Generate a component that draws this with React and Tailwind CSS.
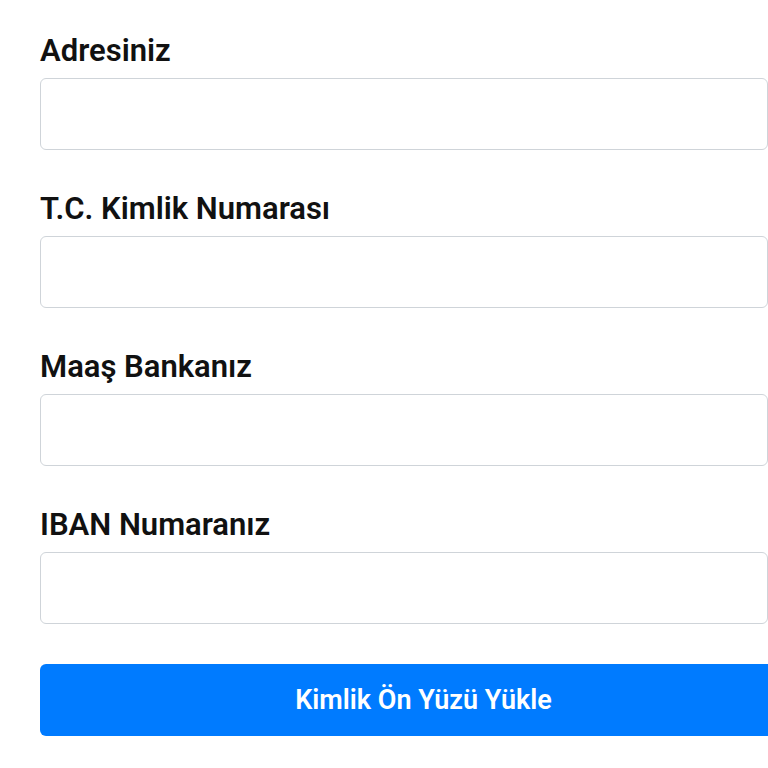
export default function App() {
  const fields = ["Adresiniz", "T.C. Kimlik Numarası", "Maaş Bankanız", "IBAN Numaranız"];
  return (
    <div className="w-[768px] h-[768px] overflow-hidden bg-white pl-[40px] pt-[32px]" style={{ fontFamily: "Roboto, 'Noto Sans', sans-serif" }}>
      <div className="w-[728px] flex flex-col">
        {fields.map((f) => (
          <div key={f} className="flex flex-col mb-[40px]">
            <label className="text-[31px] leading-[37px] font-semibold text-[#111111] mb-[9px]">{f}</label>
            <input type="text" className="h-[72px] w-[728px] border border-[#cfd4d9] rounded-[6px] bg-white outline-none" />
          </div>
        ))}
        <button className="h-[72px] w-[767px] shrink-0 rounded-[6px] bg-[#007bff] text-white text-[27px] font-semibold">
          Kimlik Ön Yüzü Yükle
        </button>
      </div>
    </div>
  );
}
